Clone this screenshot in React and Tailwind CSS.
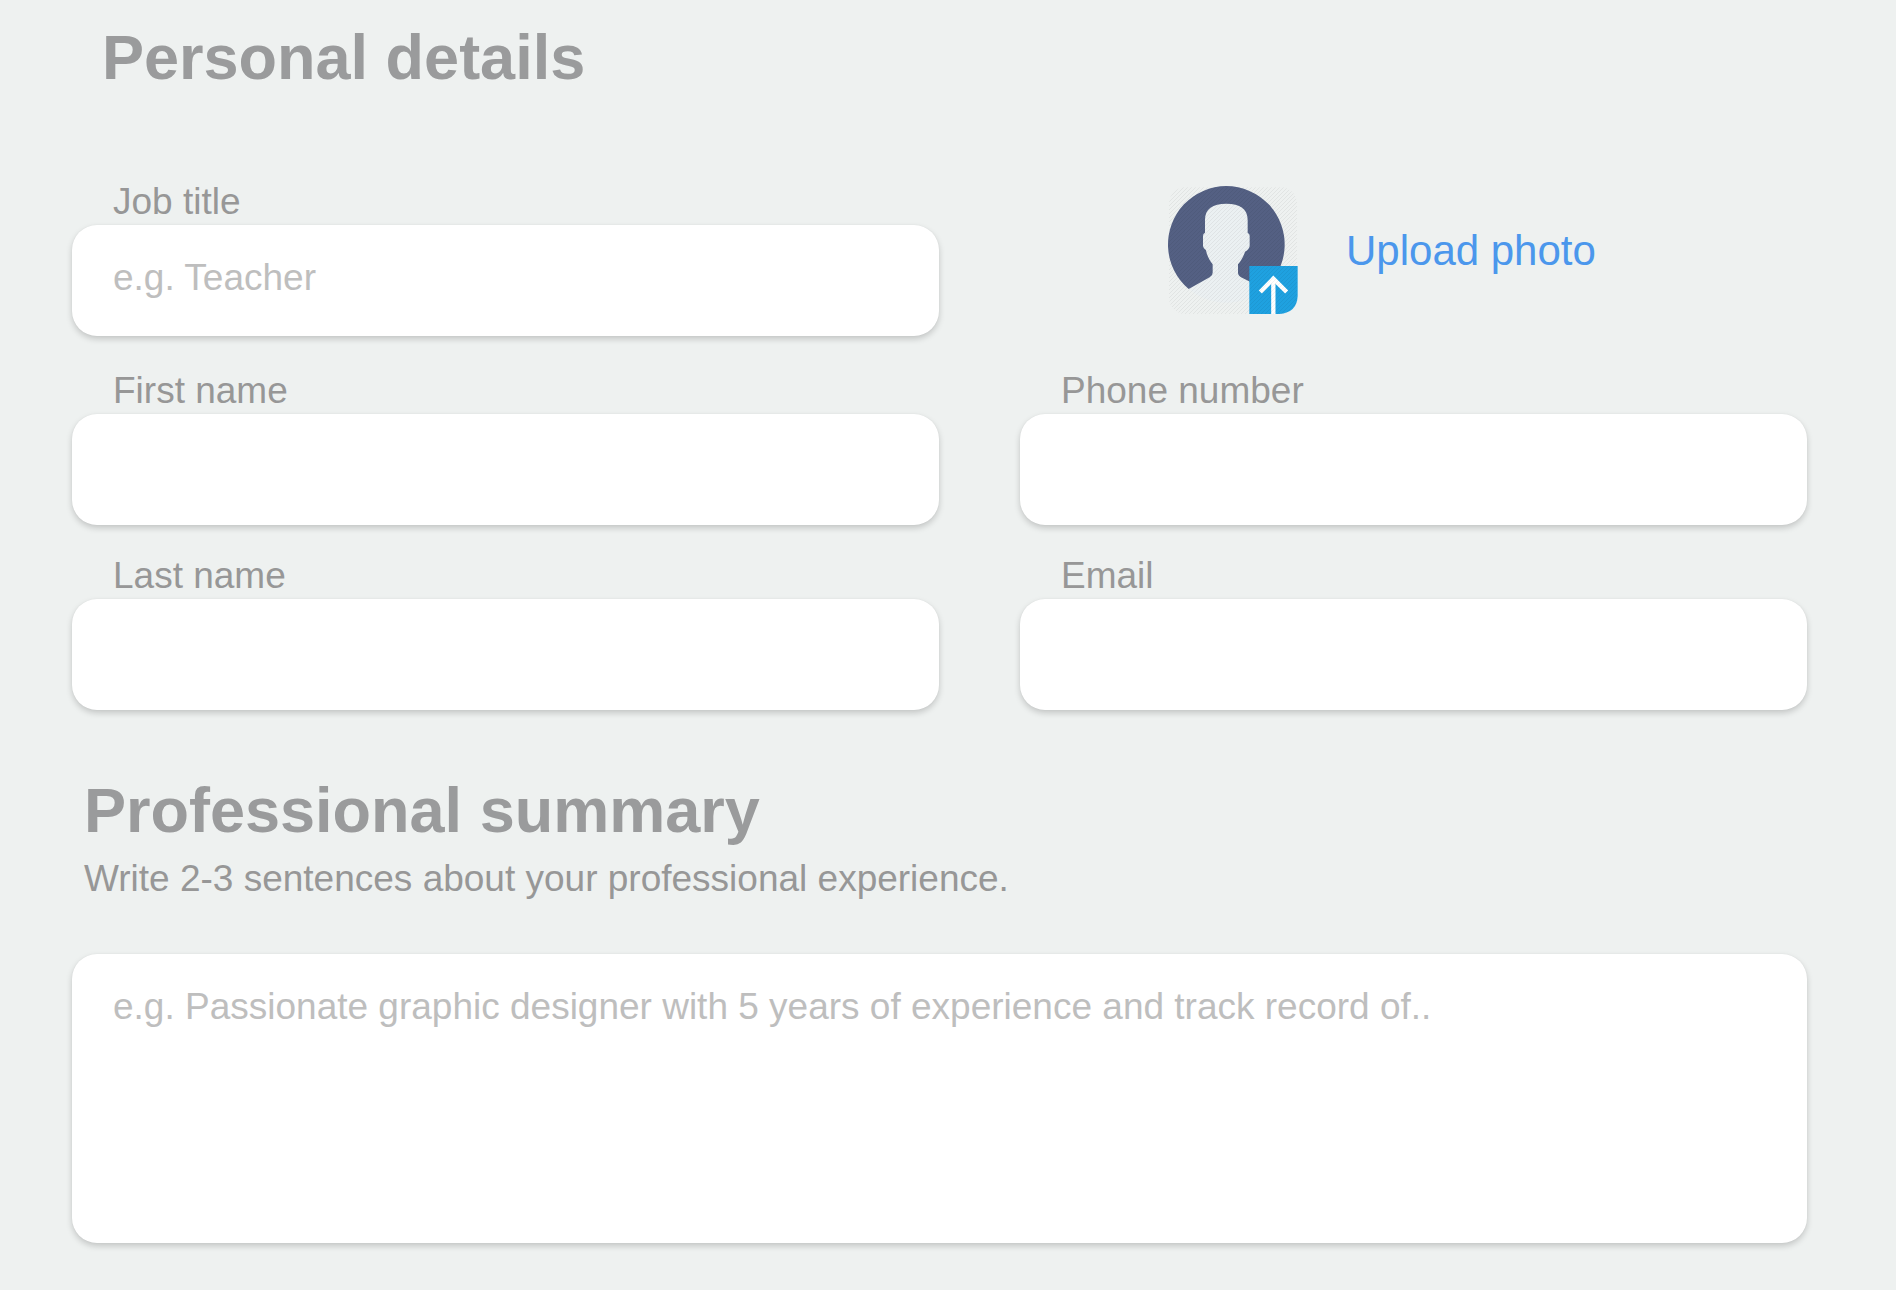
const fieldClass =
  "block w-full rounded-[25px] bg-white px-[41px] text-[37px] leading-[42px] text-[#979797] shadow-[0_3px_6px_rgba(0,0,0,0.18),0_0_2px_rgba(0,0,0,0.04)] outline-none placeholder:text-[#bebebe]";

function Field({ id, label, type = "text", placeholder }) {
  return (
    <div>
      <label htmlFor={id} className="mb-0.5 block pl-[41px] text-[37px] leading-[42px] text-[#979797]">
        {label}
      </label>
      <input id={id} name={id} type={type} placeholder={placeholder} className={`${fieldClass} h-[111px] pb-1.5`} />
    </div>
  );
}

// Diagonal strokes that texture the avatar plate.
const hatchPath = Array.from({ length: 66 }, (_, i) => `M${57 + i * 12} 48 l-390 390`).join(" ");

function AvatarIcon() {
  return (
    <svg viewBox="54 48 390 384" className="h-32 w-[130px] shrink-0" aria-hidden="true">
      <defs>
        <clipPath id="plate">
          <rect x="57" y="52" width="384" height="380" rx="48" />
        </clipPath>
      </defs>
      <circle cx="229" cy="223" r="175" fill="#ebf0f2" />
      <path
        fill="#546083"
        d="M116 357 A175 175 0 1 1 342 357 L300 335 L276 323 Q264 317 264 308 V283 C272 273 280 262 285 245 Q298 238 299 228 V198 Q299 191 293 189 V150 C293 116 270 101 229 101 C188 101 165 116 165 150 V188 Q159 191 159 198 V228 Q160 236 168 241 C171 258 179 271 188 283 V308 Q188 317 179 322 Z"
      />
      <path fill="#1fa1e0" d="M298 288 H443 V378 Q441 428 388 432 H298 Z" />
      <path fill="none" stroke="#ffffff" strokeWidth="13" d="M331 366 L370 326 L410 366" />
      <path fill="none" stroke="#ffffff" strokeWidth="13" d="M370 326 V432" />
      <path d={hatchPath} clipPath="url(#plate)" fill="none" stroke="#000000" strokeOpacity="0.05" strokeWidth="3" />
    </svg>
  );
}

export default function App() {
  return (
    <main className="min-h-screen bg-[#eef1f0] pt-[21px] pr-[89px] pb-[47px] pl-[72px] font-['Liberation_Sans',Arial,sans-serif]">
      <form>
        <section>
          <h1 className="mb-[88px] pl-[30px] text-[63px] leading-[72px] font-bold text-[#9a9b9c]">Personal details</h1>
          <div className="mb-[34px] grid grid-cols-[867fr_787fr] gap-x-[81px]">
            <Field id="job-title" label="Job title" placeholder="e.g. Teacher" />
            <button type="button" className="mt-[5px] ml-[148px] flex cursor-pointer items-center gap-12 self-start justify-self-start">
              <AvatarIcon />
              <span className="pt-0.5 text-[42px] leading-12 whitespace-nowrap text-[#4b97ec]">Upload photo</span>
            </button>
          </div>
          <div className="grid grid-cols-[867fr_787fr] gap-x-[81px] gap-y-[30px]">
            <Field id="first-name" label="First name" />
            <Field id="phone" label="Phone number" type="tel" />
            <Field id="last-name" label="Last name" />
            <Field id="email" label="Email" type="email" />
          </div>
        </section>
        <section className="mt-16">
          <h2 className="pl-3 text-[63px] leading-[72px] font-bold text-[#9a9b9c]">
            <label htmlFor="summary">Professional summary</label>
          </h2>
          <p id="summary-hint" className="mt-3 mb-[54px] pl-3 text-[37px] leading-[42px] text-[#979797]">
            Write 2-3 sentences about your professional experience.
          </p>
          <textarea
            id="summary"
            name="summary"
            aria-describedby="summary-hint"
            placeholder="e.g. Passionate graphic designer with 5 years of experience and track record of.."
            className={`${fieldClass} h-[289px] resize-none py-8`}
          />
        </section>
      </form>
    </main>
  );
}
